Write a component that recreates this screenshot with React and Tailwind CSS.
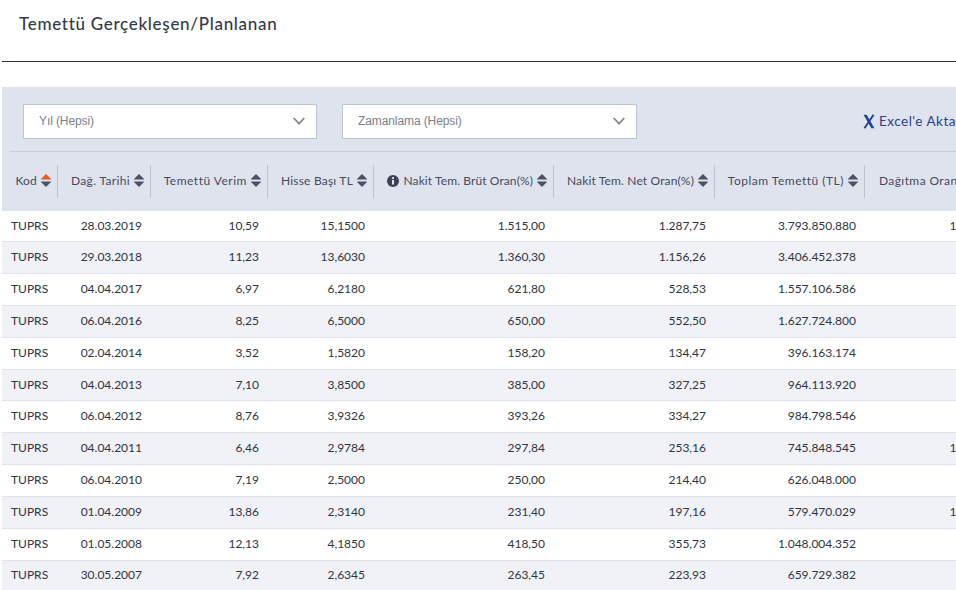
import React from "react";

const headers = [
  { label: "Kod", width: "w-[48px]", active: true, track: "tracking-[0.2px]" },
  { label: "Dağ. Tarihi", width: "w-[93px]", track: "tracking-[0.35px]" },
  { label: "Temettü Verim", width: "w-[117px]", track: "tracking-[0.5px]" },
  { label: "Hisse Başı TL", width: "w-[106px]", track: "tracking-[0.2px]" },
  { label: "Nakit Tem. Brüt Oran(%)", width: "w-[180px]", info: true, track: "tracking-[0.1px]" },
  { label: "Nakit Tem. Net Oran(%)", width: "w-[161px]", track: "tracking-[0.15px]" },
  { label: "Toplam Temettü (TL)", width: "w-[150px]", track: "tracking-[0.5px]" },
];

const rows = [
  ["28.03.2019", "10,59", "15,1500", "1.515,00", "1.287,75", "3.793.850.880", "100,00"],
  ["29.03.2018", "11,23", "13,6030", "1.360,30", "1.156,26", "3.406.452.378", "80,00"],
  ["04.04.2017", "6,97", "6,2180", "621,80", "528,53", "1.557.106.586", "70,00"],
  ["06.04.2016", "8,25", "6,5000", "650,00", "552,50", "1.627.724.800", "80,00"],
  ["02.04.2014", "3,52", "1,5820", "158,20", "134,47", "396.163.174", "70,00"],
  ["04.04.2013", "7,10", "3,8500", "385,00", "327,25", "964.113.920", "70,00"],
  ["06.04.2012", "8,76", "3,9326", "393,26", "334,27", "984.798.546", "70,00"],
  ["04.04.2011", "6,46", "2,9784", "297,84", "253,16", "745.848.545", "100,00"],
  ["06.04.2010", "7,19", "2,5000", "250,00", "214,40", "626.048.000", "70,00"],
  ["01.04.2009", "13,86", "2,3140", "231,40", "197,16", "579.470.029", "100,00"],
  ["01.05.2008", "12,13", "4,1850", "418,50", "355,73", "1.048.004.352", "70,00"],
  ["30.05.2007", "7,92", "2,6345", "263,45", "223,93", "659.729.382", "80,00"],
];

const SortIcon = ({ active }) => (
  <svg width="10" height="13" viewBox="0 0 10 13" className="shrink-0">
    <path d="M5 0 L10 5 Q10 5.6 9.4 5.6 H0.6 Q0 5.6 0 5 Z" fill={active ? "#f0561d" : "#4a5163"} />
    <path d="M0.6 7.4 H9.4 Q10 7.4 10 8 L5 13 L0 8 Q0 7.4 0.6 7.4 Z" fill="#4a5163" />
  </svg>
);

const InfoIcon = () => (
  <svg width="12" height="12" viewBox="0 0 12 12" className="shrink-0 mr-[1px]">
    <circle cx="6" cy="6" r="6" fill="#3c4354" />
    <rect x="5" y="5" width="2" height="4.5" fill="#dfe3ee" />
    <rect x="5" y="2.2" width="2" height="1.8" fill="#dfe3ee" />
  </svg>
);

const ExcelIcon = () => (
  <svg width="12" height="15" viewBox="0 0 12 15" className="shrink-0">
    <path d="M0.6 0.8 H3.6 L11.4 14.2 H8.4 Z" fill="#1f3f9a" />
    <path d="M10.6 0.8 L1.4 14.2" fill="none" stroke="#1f3f9a" strokeWidth="1.9" />
  </svg>
);

const Chevron = () => (
  <svg width="12" height="8" viewBox="0 0 12 8" className="shrink-0">
    <path d="M0.7 1 L6 6.6 L11.3 1" fill="none" stroke="#858b95" strokeWidth="1.8" />
  </svg>
);

const SelectBox = ({ label, width }) => (
  <div className={`${width} h-[35px] bg-white border border-[#bcc4d8] flex items-center justify-between pl-[15px] pr-[11px] pb-[1px] shrink-0`}>
    <span className="text-[12px] tracking-[-0.1px] text-[#7b818c] font-['Liberation_Sans',sans-serif]">{label}</span>
    <Chevron />
  </div>
);

export default function App() {
  return (
    <div className="w-[956px] h-[590px] overflow-hidden bg-white font-['Lato',sans-serif]">
      {/* baslik */}
      <div className="h-[62px] ml-[2px] border-b border-[#30343f] pt-[13px] pl-[17px]">
        <h1 className="text-[17px] leading-[22px] font-medium text-[#333a4b] tracking-[0.7px]">
          Temettü Gerçekleşen/Planlanan
        </h1>
      </div>

      <div className="mt-[25px] ml-[2px]">
        {/* filtreler */}
        <div className="bg-[#dfe3ee]">
          <div className="h-[64px] pl-[21px] pt-[17px] flex items-start gap-[25px] whitespace-nowrap">
            <SelectBox label="Yıl (Hepsi)" width="w-[294px]" />
            <SelectBox label="Zamanlama (Hepsi)" width="w-[295px]" />
            <div className="ml-[201px] h-[35px] flex items-center gap-[4px] text-[#27408b]">
              <ExcelIcon />
              <span className="text-[13.5px] tracking-[0.5px]">Excel'e Aktar</span>
            </div>
          </div>

          {/* tablo basligi */}
          <div className="ml-[8px] border-t border-[#c8cedd] h-[59.6px] pt-[13px] flex whitespace-nowrap text-[12px] text-[#444b5e]">
            {headers.map((h) => (
              <div
                key={h.label}
                className={`${h.width} ${h.track} h-[33px] shrink-0 flex items-center justify-end gap-[4px] pr-[6px] pb-[2px] border-r border-[#bcc2ce]`}
              >
                {h.info && <InfoIcon />}
                <span>{h.label}</span>
                <SortIcon active={h.active} />
              </div>
            ))}
            <div className="w-[120px] h-[33px] shrink-0 flex items-center pl-[14px] pb-[2px] tracking-[0.4px]">
              Dağıtma Oranı
            </div>
          </div>
        </div>

        {/* satirlar */}
        {rows.map((row, i) => (
          <div
            key={row[0]}
            className={`h-[31.82px] pb-[1px] flex items-center border-b border-[#dfe3ee] text-[12px] text-[#2f3442] whitespace-nowrap ${
              i % 2 === 1 ? "bg-[#f1f2f8]" : "bg-white"
            }`}
          >
            <div className="w-[56px] pl-[9px] shrink-0">TUPRS</div>
            <div className="w-[84px] text-right shrink-0">{row[0]}</div>
            <div className="w-[117px] text-right shrink-0">{row[1]}</div>
            <div className="w-[106px] text-right shrink-0">{row[2]}</div>
            <div className="w-[180px] text-right shrink-0">{row[3]}</div>
            <div className="w-[161px] text-right shrink-0">{row[4]}</div>
            <div className="w-[150px] text-right shrink-0">{row[5]}</div>
            <div className="w-[131px] text-right shrink-0">{row[6]}</div>
          </div>
        ))}
      </div>
    </div>
  );
}
